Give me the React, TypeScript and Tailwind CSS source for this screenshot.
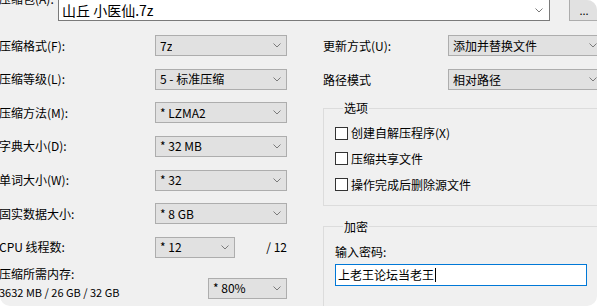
import React from "react";

const Chevron = () => (
  <svg width="8" height="5" viewBox="0 0 8 5" className="shrink-0">
    <path d="M0.5 0.5 L4 4 L7.5 0.5" fill="none" stroke="#7a7a7a" strokeWidth="1" />
  </svg>
);

function Select({ value, width }: { value: string; width: string }) {
  return (
    <div
      className={`${width} h-[21px] shrink-0 flex items-center justify-between pl-[4px] pr-[5px] bg-[#e1e1e1] border border-[#adadad] text-[12px] text-black`}
    >
      <span className="truncate">{value}</span>
      <Chevron />
    </div>
  );
}

function Row({ label, value }: { label: string; value: string }) {
  return (
    <div className="flex items-center h-[21px]">
      <span className="w-[156px] -ml-[1px] shrink-0">{label}</span>
      <Select value={value} width="w-[132px]" />
    </div>
  );
}

function Check({ label }: { label: string }) {
  return (
    <div className="flex items-center h-[20px]">
      <span className="w-[13px] h-[13px] shrink-0 border border-[#333333] bg-white" />
      <span className="ml-[3px]">{label}</span>
    </div>
  );
}

export default function App() {
  return (
    <div className="w-[597px] h-[306px] overflow-hidden bg-[#f0f0f0] rounded-tr-[10px] rounded-bl-[10px] rounded-br-[10px] text-[12px] leading-[16px] text-black font-['Microsoft_YaHei_UI','Noto_Sans_CJK_SC',sans-serif]">
      {/* archive name row */}
      <div className="flex items-start -mt-[1px] h-[22px]">
        <span className="w-[59px] shrink-0 -mt-[8px] -ml-[1px]">压缩包(A):</span>
        <div className="w-[492px] h-[22px] shrink-0 flex items-center justify-between pl-[3px] pr-[6px] bg-white border border-[#7a7a7a] text-[14px]">
          <span>山丘 小医仙.7z</span>
          <Chevron />
        </div>
        <div className="ml-[19px] w-[40px] h-[22px] shrink-0 flex items-center justify-center bg-[#e1e1e1] border border-[#adadad] text-[11px] pr-[10px]">
          ...
        </div>
      </div>

      <div className="flex mt-[14px]">
        {/* left column */}
        <div className="w-[323px] shrink-0 flex flex-col">
          <div className="flex flex-col gap-[12.67px]">
            <Row label="压缩格式(F):" value="7z" />
            <Row label="压缩等级(L):" value="5 - 标准压缩" />
            <Row label="压缩方法(M):" value="* LZMA2" />
            <Row label="字典大小(D):" value="* 32 MB" />
            <Row label="单词大小(W):" value="* 32" />
            <Row label="固实数据大小:" value="* 8 GB" />
            <div className="flex items-center h-[21px] w-[287px]">
              <span className="w-[156px] -ml-[1px] shrink-0">CPU 线程数:</span>
              <Select value="* 12" width="w-[80px]" />
              <span className="ml-auto">/ 12</span>
            </div>
          </div>
          <div className="flex items-start mt-[6px]">
            <div className="w-[209px] -ml-[1px] shrink-0 leading-[19px]">
              <div>压缩所需内存:</div>
              <div className="text-[11px]">3632 MB / 26 GB / 32 GB</div>
            </div>
            <div className="mt-[14px]">
              <Select value="* 80%" width="w-[79px]" />
            </div>
          </div>
        </div>

        {/* right column */}
        <div className="flex flex-col w-[290px] shrink-0">
          <div className="flex flex-col gap-[13px]">
            <div className="flex items-center h-[21px]">
              <span className="w-[125px] shrink-0">更新方式(U):</span>
              <Select value="添加并替换文件" width="w-[155px]" />
            </div>
            <div className="flex items-center h-[21px]">
              <span className="w-[125px] shrink-0">路径模式</span>
              <Select value="相对路径" width="w-[155px]" />
            </div>
          </div>

          <fieldset className="mt-[10px] border border-[#dcdcdc] pl-[11px] pb-[10px]">
            <legend className="ml-[8px] px-[1px]">选项</legend>
            <div className="flex flex-col gap-[5.75px] mt-[7px]">
              <Check label="创建自解压程序(X)" />
              <Check label="压缩共享文件" />
              <Check label="操作完成后删除源文件" />
            </div>
          </fieldset>

          <fieldset className="mt-[13px] border border-[#dcdcdc] pl-[11px] h-[120px]">
            <legend className="ml-[8px] px-[1px]">加密</legend>
            <div className="mt-[9px]">输入密码:</div>
            <div className="mt-[4px] w-[252px] h-[22px] flex items-center pl-[2px] bg-white border border-[#0078d7]">
              <span>上老王论坛当老王</span>
              <span className="inline-block w-[1px] h-[14px] bg-black ml-[1px]" />
            </div>
          </fieldset>
        </div>
      </div>
    </div>
  );
}
